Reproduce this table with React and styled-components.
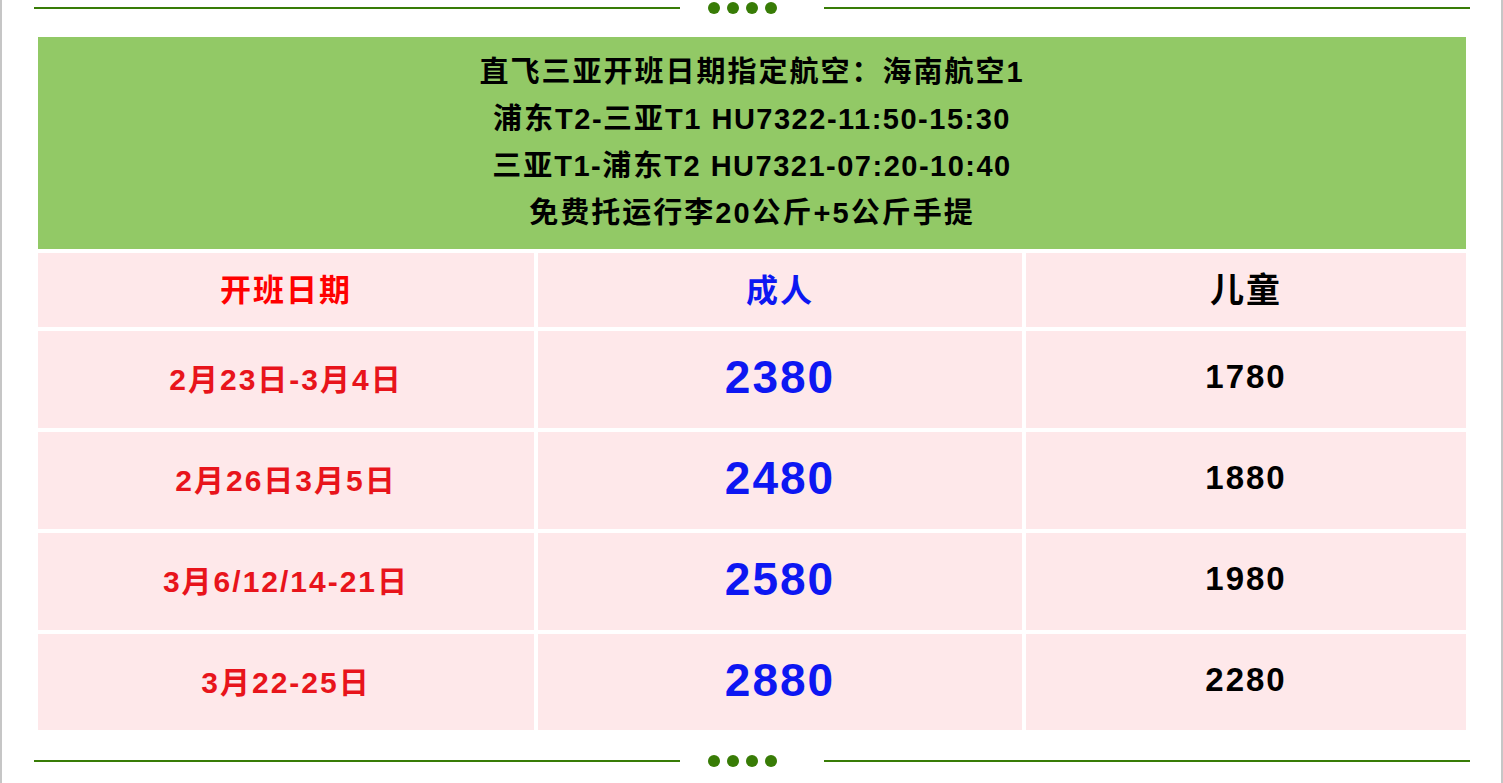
import React from 'react';
import styled, { createGlobalStyle } from 'styled-components';

const GlobalStyle = createGlobalStyle`
  html, body {
    margin: 0;
    padding: 0;
    background: #ffffff;
  }
  body {
    font-family: "Liberation Sans", "Noto Sans CJK SC", sans-serif;
  }
`;

const Page = styled.div`
  box-sizing: border-box;
  width: 1503px;
  height: 783px;
  border-left: 2px solid #c6c6c6;
  border-right: 2px solid #c6c6c6;
  padding-top: 2px;
  overflow: hidden;
`;

const Divider = styled.div`
  display: flex;
  align-items: center;
  height: 12px;
  margin-left: 32px;
  margin-top: ${(p) => p.$top || 0}px;
`;

const Line = styled.span`
  display: block;
  width: 646px;
  height: 2px;
  background: #387c06;
`;

const Dots = styled.span`
  display: flex;
  gap: 7px;
  margin: 0 47px 0 28px;
`;

const Dot = styled.span`
  display: block;
  width: 12px;
  height: 12px;
  border-radius: 50%;
  background: #387c06;
`;

const Table = styled.div`
  display: grid;
  grid-template-columns: 496px 484px 440px;
  grid-template-rows: 212px 74px 97px 97px 97px 96px;
  gap: 4px;
  width: 1428px;
  margin: 23px 0 0 36px;
  font-weight: 700;
`;

const Banner = styled.div`
  grid-column: 1 / 4;
  background: #92c966;
  padding: 12px 0;
  text-align: center;
  color: #000000;
  font-size: 29px;
  line-height: 47px;
  letter-spacing: 2px;
`;

const Latin = styled.span`
  letter-spacing: 1.5px;
`;

const Cell = styled.div`
  display: flex;
  align-items: center;
  justify-content: center;
  padding-bottom: 5px;
  background: #fee8ea;
  color: ${(p) => p.$color};
  font-size: ${(p) => p.$size}px;
  letter-spacing: 2px;
`;

const rows = [
  { date: '2月23日-3月4日', adult: '2380', child: '1780' },
  { date: '2月26日3月5日', adult: '2480', child: '1880' },
  { date: '3月6/12/14-21日', adult: '2580', child: '1980' },
  { date: '3月22-25日', adult: '2880', child: '2280' },
];

const Ornament = ({ top }) => (
  <Divider $top={top}>
    <Line />
    <Dots>
      <Dot />
      <Dot />
      <Dot />
      <Dot />
    </Dots>
    <Line />
  </Divider>
);

const App = () => {
  return (
    <>
      <GlobalStyle />
      <Page>
        <Ornament />
        <Table>
          <Banner>
            <div>直飞三亚开班日期指定航空：海南航空1</div>
            <div>浦东<Latin>T2-</Latin>三亚<Latin>T1 HU7322-11:50-15:30</Latin></div>
            <div>三亚<Latin>T1-</Latin>浦东<Latin>T2 HU7321-07:20-10:40</Latin></div>
            <div>免费托运行李20公斤+5公斤手提</div>
          </Banner>
          <Cell $color="#ff0000" $size={31}>开班日期</Cell>
          <Cell $color="#0d17f2" $size={32}>成人</Cell>
          <Cell $color="#000000" $size={34}>儿童</Cell>
          {rows.map((r) => (
            <React.Fragment key={r.date}>
              <Cell $color="#e8141b" $size={30}>{r.date}</Cell>
              <Cell $color="#0d17f2" $size={46}>{r.adult}</Cell>
              <Cell $color="#000000" $size={33}>{r.child}</Cell>
            </React.Fragment>
          ))}
        </Table>
        <Ornament top={25} />
      </Page>
    </>
  );
};

export default App;
